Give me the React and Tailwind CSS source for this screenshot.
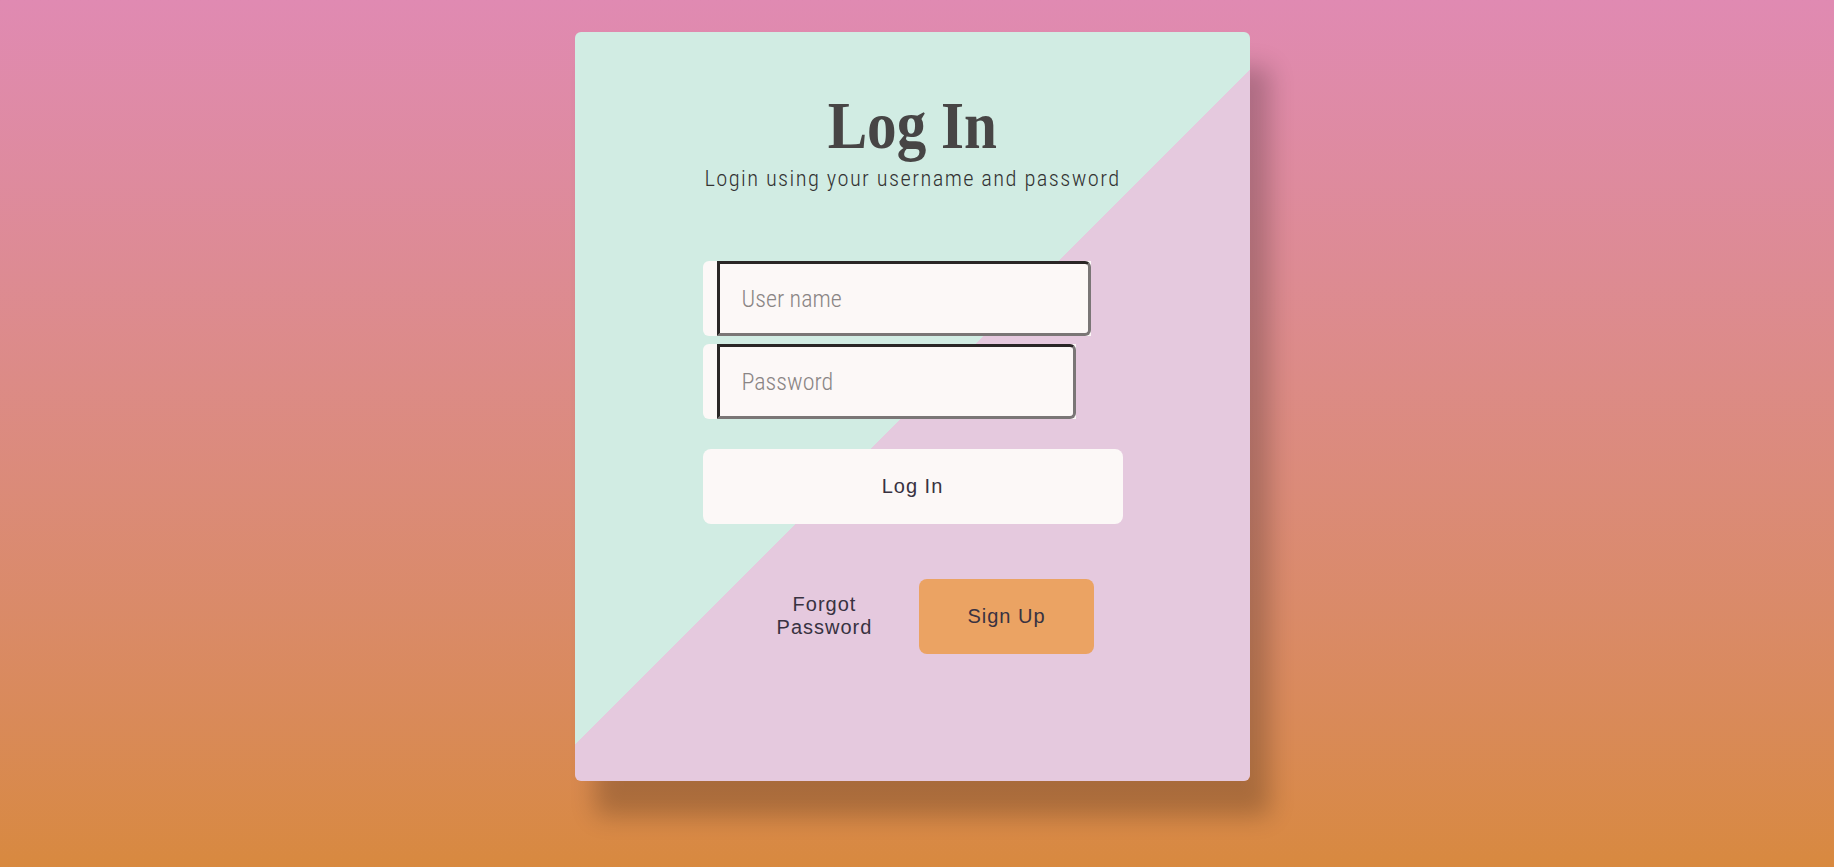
import React, { useState } from "react";

const App = () => {
  const [username, setUsername] = useState("");
  const [password, setPassword] = useState("");

  return (
    <div className="min-h-[867px] w-full bg-gradient-to-b from-[#e08ab2] to-[#d8893f] flex justify-center pr-[9px]">
      {/* Card */}
      <div className="mt-[32px] w-[675px] h-[749px] rounded-[6px] bg-[linear-gradient(135deg,#d1ece3_50%,#e5c9de_50%)] shadow-[20px_35px_25px_rgba(0,0,0,0.22)] flex flex-col items-center">
        <h1 className="mt-[59px] h-[68px] leading-[68px] text-[68px] font-bold text-[#474545] font-['Liberation_Serif',serif] scale-x-[0.87]">
          Log In
        </h1>
        <p className="mt-[5px] h-[28px] leading-[28px] text-[22.5px] font-light tracking-[1.4px] text-[#333] font-['Roboto',sans-serif] [font-stretch:75%]">
          Login using your username and password
        </p>

        <form
          onSubmit={(e) => e.preventDefault()}
          className="mt-[69px] w-[420px] flex flex-col items-start"
        >
          {/* User name */}
          <div className="inline-flex bg-[#fcf8f7] pl-[14px] rounded-l-[6px]">
            <input
              type="text"
              value={username}
              onChange={(e) => setUsername(e.target.value)}
              placeholder="User name"
              className="w-[374px] h-[75px] bg-[#fcf8f7] pl-[22px] border-[3px] border-t-[#2a2626] border-l-[#2a2626] border-r-[#7a7676] border-b-[#7a7676] rounded-r-[6px] text-[24px] text-[#444] placeholder:text-[#8a8585] font-['Roboto',sans-serif] font-light [font-stretch:75%] outline-none"
            />
          </div>

          {/* Password */}
          <div className="inline-flex bg-[#fcf8f7] pl-[14px] rounded-l-[6px] mt-[8px]">
            <input
              type="password"
              value={password}
              onChange={(e) => setPassword(e.target.value)}
              placeholder="Password"
              className="w-[359px] h-[75px] bg-[#fcf8f7] pl-[22px] border-[3px] border-t-[#2a2626] border-l-[#2a2626] border-r-[#7a7676] border-b-[#7a7676] rounded-r-[6px] text-[24px] text-[#444] placeholder:text-[#8a8585] font-['Roboto',sans-serif] font-light [font-stretch:75%] outline-none"
            />
          </div>

          {/* Log In button */}
          <button
            type="submit"
            className="mt-[30px] w-[420px] h-[75px] pb-[2px] bg-[#fcf8f7] rounded-[8px] text-[20px] tracking-[1px] text-[#383241] font-['Liberation_Sans',sans-serif]"
          >
            Log In
          </button>
        </form>

        <div className="mt-[55px] flex gap-[7px] pl-[6px]">
          <button className="w-[175px] h-[75px] px-[36px] pb-[2px] text-[20px] leading-[23px] tracking-[1px] text-[#383241] font-['Liberation_Sans',sans-serif]">
            Forgot Password
          </button>
          <button className="w-[175px] h-[75px] pb-[2px] bg-[#eba363] rounded-[8px] text-[20px] tracking-[1px] text-[#383241] font-['Liberation_Sans',sans-serif]">
            Sign Up
          </button>
        </div>
      </div>
    </div>
  );
};

export default App;
